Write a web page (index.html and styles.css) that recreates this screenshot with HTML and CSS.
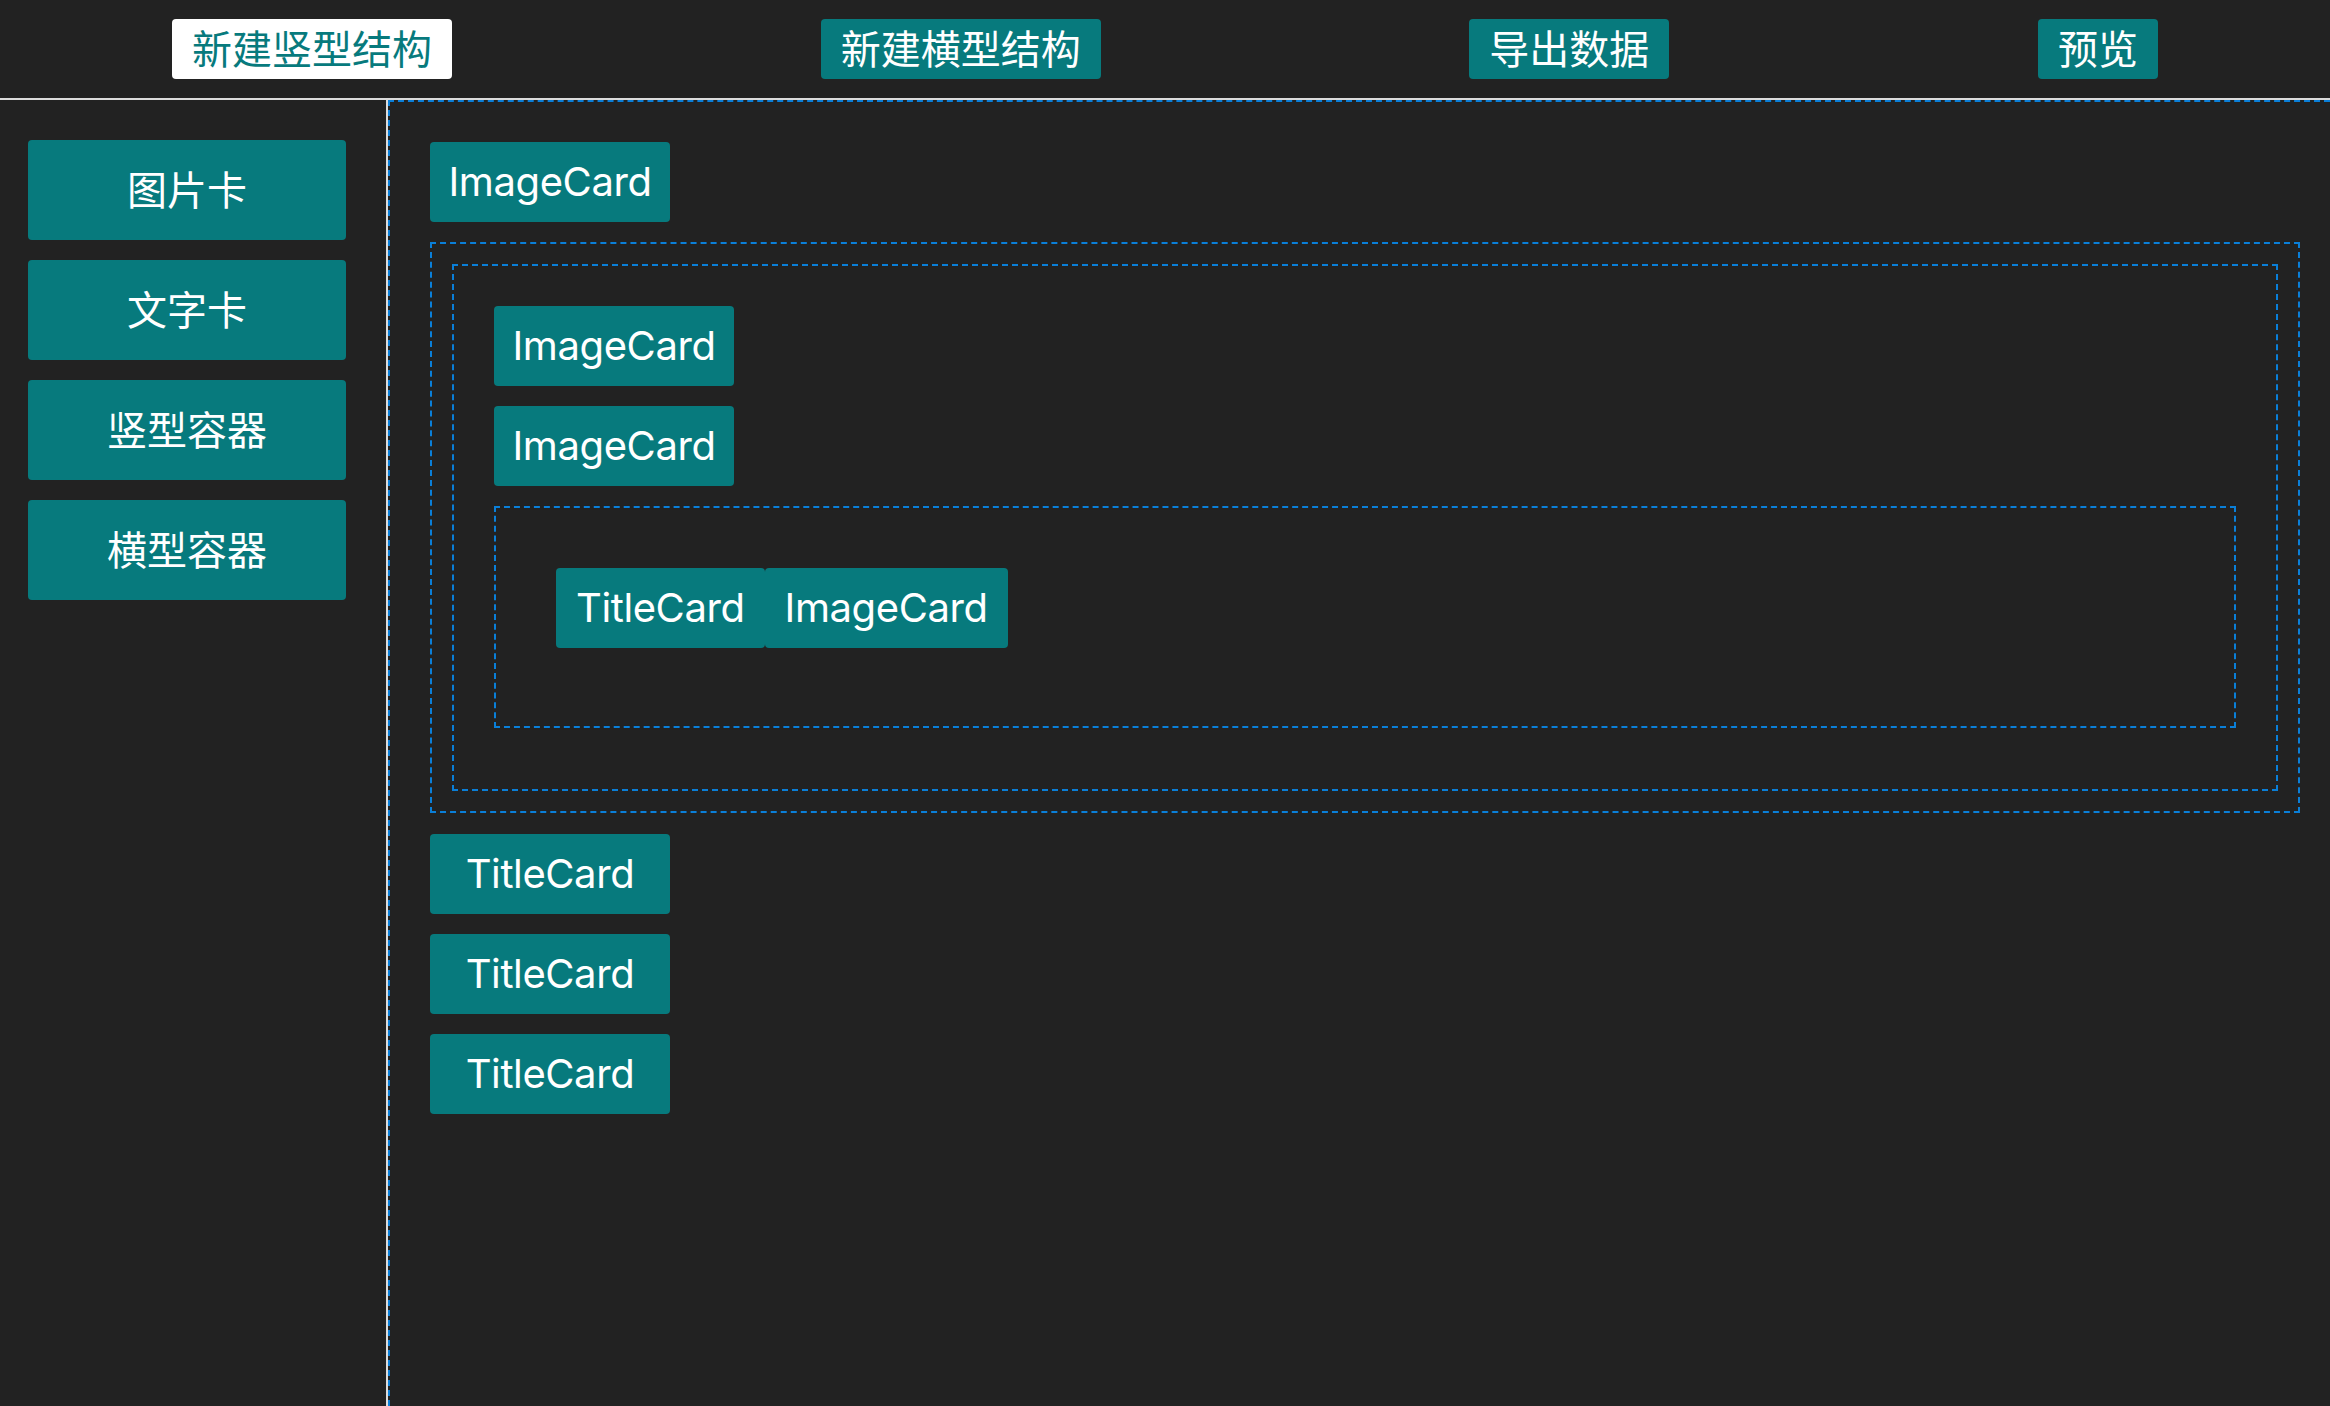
FILE: index.html
```html
<!DOCTYPE html>
<html lang="zh-CN">
<head>
<meta charset="utf-8">
<title>Layout Builder</title>
<link rel="stylesheet" href="styles.css">
</head>
<body>
<header class="toolbar">
  <button class="tool-btn active">新建竖型结构</button>
  <button class="tool-btn">新建横型结构</button>
  <button class="tool-btn">导出数据</button>
  <button class="tool-btn">预览</button>
</header>
<div class="main">
  <aside class="sidebar">
    <div class="palette-item">图片卡</div>
    <div class="palette-item">文字卡</div>
    <div class="palette-item">竖型容器</div>
    <div class="palette-item">横型容器</div>
  </aside>
  <section class="canvas">
    <div class="card">ImageCard</div>
    <div class="box box-outer">
      <div class="box box-inner">
        <div class="card">ImageCard</div>
        <div class="card">ImageCard</div>
        <div class="box box-row">
          <div class="card card-auto">TitleCard</div>
          <div class="card card-auto">ImageCard</div>
        </div>
      </div>
    </div>
    <div class="card">TitleCard</div>
    <div class="card">TitleCard</div>
    <div class="card">TitleCard</div>
  </section>
</div>
</body>
</html>
```

FILE: styles.css
```css
html, body {
  margin: 0;
  padding: 0;
  height: 100%;
}

body {
  background: #222222;
  overflow: hidden;
  font-family: "Inter", "Noto Sans CJK SC", sans-serif;
  color: #ffffff;
}

.toolbar {
  box-sizing: border-box;
  height: 100px;
  border-bottom: 2px solid #dcdcdc;
  display: flex;
  align-items: center;
  justify-content: space-between;
  padding: 0 172px;
}

.tool-btn {
  box-sizing: border-box;
  height: 60px;
  padding: 0 20px 4px;
  border: none;
  border-radius: 4px;
  background: #077a7d;
  color: #ffffff;
  font-family: "Noto Sans CJK SC", sans-serif;
  font-size: 40px;
  line-height: 56px;
  cursor: pointer;
}

.tool-btn.active {
  background: #ffffff;
  color: #077a7d;
}

.main {
  display: flex;
  height: calc(100% - 100px);
}

.sidebar {
  box-sizing: border-box;
  width: 388px;
  flex: none;
  border-right: 2px solid #dcdcdc;
  padding: 40px 40px 0 28px;
  display: flex;
  flex-direction: column;
  gap: 20px;
}

.palette-item {
  box-sizing: border-box;
  height: 100px;
  padding-bottom: 4px;
  border-radius: 4px;
  background: #077a7d;
  color: #ffffff;
  font-family: "Noto Sans CJK SC", sans-serif;
  font-size: 40px;
  display: flex;
  align-items: center;
  justify-content: center;
}

.canvas {
  flex: 1;
  min-width: 0;
  border: 2px dashed #0a7fd8;
  border-right: none;
  border-bottom: none;
  padding: 40px 30px 40px 40px;
}

.card {
  width: 240px;
  height: 80px;
  box-sizing: border-box;
  border-radius: 4px;
  background: #077a7d;
  color: #ffffff;
  font-size: 40px;
  letter-spacing: -0.4px;
  line-height: 80px;
  text-align: center;
  margin-bottom: 20px;
}

.box {
  border: 2px dashed #0a7fd8;
}

.box-outer {
  padding: 20px;
  margin-bottom: 21px;
}

.box-inner {
  padding: 40px 40px 41px;
}

.box-row {
  display: flex;
  padding: 60px 60px 78px;
  margin-bottom: 20px;
}

.card-auto {
  width: auto;
  padding: 0 20px;
  margin-bottom: 0;
}
```
